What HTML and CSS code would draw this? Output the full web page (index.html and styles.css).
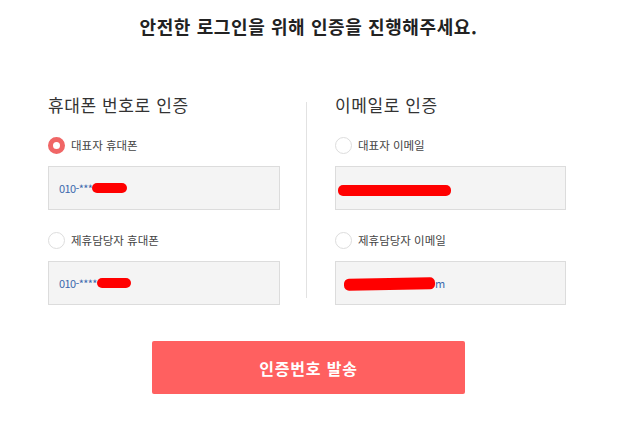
FILE: index.html
```html
<!DOCTYPE html>
<html lang="ko">
<head>
<meta charset="utf-8">
<link rel="stylesheet" href="styles.css">
</head>
<body>
<div class="page">
  <h1 class="title">안전한 로그인을 위해 인증을 진행해주세요.</h1>
  <div class="columns">
    <div class="col">
      <h2 class="col-title">휴대폰 번호로 인증</h2>
      <label class="option">
        <span class="radio radio-on"></span>
        <span class="label-text">대표자 휴대폰</span>
      </label>
      <div class="field"><span class="val">010-***</span><span class="mask mask-a"></span></div>
      <label class="option option-2">
        <span class="radio"></span>
        <span class="label-text">제휴담당자 휴대폰</span>
      </label>
      <div class="field"><span class="val">010-****</span><span class="mask mask-b"></span></div>
    </div>
    <div class="divider"></div>
    <div class="col">
      <h2 class="col-title">이메일로 인증</h2>
      <label class="option">
        <span class="radio"></span>
        <span class="label-text">대표자 이메일</span>
      </label>
      <div class="field"><span class="mask mask-c"></span></div>
      <label class="option option-2">
        <span class="radio"></span>
        <span class="label-text">제휴담당자 이메일</span>
      </label>
      <div class="field field-pad"><span class="mask mask-d"></span><span class="val">m</span></div>
    </div>
  </div>
  <div class="actions">
    <button class="submit">인증번호 발송</button>
  </div>
</div>
</body>
</html>
```
FILE: styles.css
```css
* { box-sizing: border-box; }
html, body { margin: 0; padding: 0; background: #fff; }
body {
  font-family: "Noto Sans CJK KR", "Noto Sans", sans-serif;
  color: #333;
}
.page {
  width: 521px;
  margin-left: 48px;
}
.title {
  margin: 0;
  padding-top: 13px;
  font-size: 18px;
  line-height: 26px;
  font-weight: 700;
  color: #222;
  text-align: center;
  letter-spacing: 0.6px;
}
.columns {
  display: flex;
  margin-top: 54px;
}
.col {
  width: 232px;
  display: flex;
  flex-direction: column;
}
.col + .divider + .col { width: 231px; }
.divider {
  width: 1px;
  background: #e2e2e2;
  margin: 9px 28px 0 26px;
  height: 196px;
}
.col-title {
  margin: 0;
  font-size: 17px;
  line-height: 24px;
  font-weight: 400;
  color: #333;
  letter-spacing: 0.6px;
}
.option {
  display: flex;
  align-items: center;
  gap: 6px;
  margin-top: 19px;
  height: 18px;
}
.option-2 { margin-top: 21px; }
.radio {
  width: 17px;
  height: 17px;
  border-radius: 50%;
  border: 1px solid #ddd;
  background: #fff;
  flex: none;
}
.radio-on {
  border: 5px solid #f06666;
  background: #fff;
}
.label-text {
  font-size: 11.5px;
  color: #444;
  line-height: 18px;
}
.field {
  margin-top: 12px;
  height: 44px;
  background: #f4f4f4;
  border: 1px solid #dcdcdc;
  display: flex;
  align-items: center;
  padding-left: 10px;
}
.val {
  font-size: 11px;
  color: #3c6aae;
  letter-spacing: -0.6px;
}
.mask {
  display: block;
  height: 10px;
  border-radius: 5px;
  background: #f00;
}
.mask-a { width: 35px; margin-left: 0; }
.mask-b { width: 34px; margin-left: 0; }
.mask-c { width: 113px; margin-left: -8px; margin-top: 4px; height: 11px; }
.mask-d { width: 91px; margin-left: -2px; margin-top: 2px; height: 12px; transform: rotate(-1deg); }
.actions {
  display: flex;
  justify-content: center;
  margin-top: 36px;
}
.submit {
  width: 313px;
  height: 53px;
  border: none;
  border-radius: 2px;
  background: #ff6060;
  color: #fff;
  font-family: "Noto Sans CJK KR", "Noto Sans", sans-serif;
  font-size: 16px;
  font-weight: 700;
  letter-spacing: 0.8px;
  cursor: pointer;
}
```
